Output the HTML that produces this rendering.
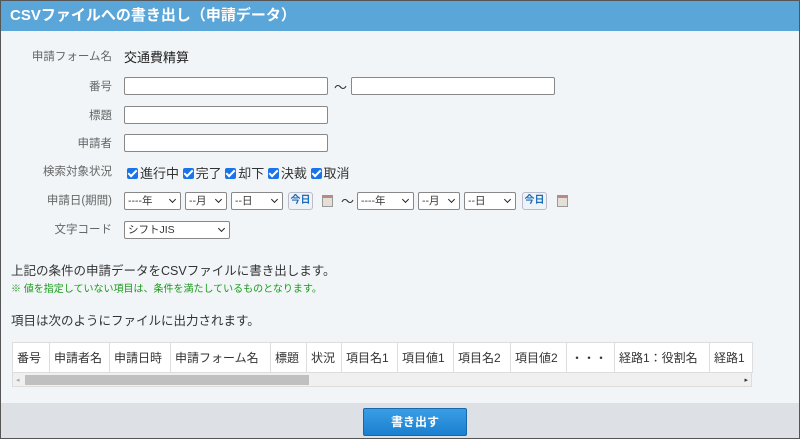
<!DOCTYPE html>
<html><head><meta charset="utf-8"><style>
*{box-sizing:border-box;margin:0;padding:0}
body{width:800px;height:439px;overflow:hidden;font-family:"Liberation Sans","Noto Sans CJK JP",sans-serif;font-size:12px;color:#333;background:#fff}
.wrap{position:absolute;left:0;top:0;width:800px;height:439px;border:1px solid #555;background:#f1f5f8}
.hd{position:absolute;left:0;top:0;width:798px;height:30px;background:#5aa6d9;color:#fff;font-weight:bold;font-size:15px;line-height:29px;padding-left:9px}
.lbl{position:absolute;right:687px;color:#666;font-size:11.5px;white-space:nowrap}
.abs{position:absolute;white-space:nowrap}
.in{position:absolute;height:18px;background:#fff;border:1px solid #888;border-radius:2px}
.sel{position:absolute;height:18px;background:#fff;border:1px solid #888;border-radius:2px;font-size:10.5px;line-height:16px;padding-left:3px;color:#333}
.sel:after{content:"";position:absolute;right:5px;top:4px;width:4px;height:4px;border-right:1.5px solid #222;border-bottom:1.5px solid #222;transform:rotate(45deg)}
.cb{display:inline-block;width:11px;height:11px;background:#1a73e8;border-radius:2px;vertical-align:-1px;margin-right:2px;position:relative}
.cb:after{content:"";position:absolute;left:3px;top:0px;width:3px;height:7px;border-right:2px solid #fff;border-bottom:2px solid #fff;transform:rotate(45deg)}
.today{position:absolute;height:18px;width:25px;background:#eef3f7;border:1px solid #bbc;border-radius:3px;color:#1e6bb8;font-weight:bold;font-size:10px;line-height:16px;text-align:center}
.cal{position:absolute;width:11px;height:12px;border:1px solid #999;background:#e4e0d8;border-top:3px solid #b88}
table{position:absolute;left:11px;top:341px;border-collapse:collapse;background:#fff}
td{border:1px solid #ddd;height:30px;padding:0 4px;font-size:12px;color:#333;white-space:nowrap}
</style></head><body><div class="wrap">
<div class="hd">CSVファイルへの書き出し（申請データ）</div>
<div class="lbl" style="top:47px">申請フォーム名</div>
<div class="abs" style="left:123px;top:46px;font-size:13px;color:#222">交通費精算</div>
<div class="lbl" style="top:77px">番号</div>
<div class="in" style="left:123px;top:76px;width:204px"></div>
<div class="abs" style="left:333px;top:76px;font-size:13px">～</div>
<div class="in" style="left:350px;top:76px;width:204px"></div>
<div class="lbl" style="top:106px">標題</div>
<div class="in" style="left:123px;top:105px;width:204px"></div>
<div class="lbl" style="top:134px">申請者</div>
<div class="in" style="left:123px;top:133px;width:204px"></div>
<div class="lbl" style="top:162px">検索対象状況</div>
<div class="abs" style="left:126px;top:162px;font-size:13px"><span class="cb"></span>進行中 <span class="cb"></span>完了 <span class="cb"></span>却下 <span class="cb"></span>決裁 <span class="cb"></span>取消</div>
<div class="lbl" style="top:191px">申請日(期間)</div>
<div class="sel" style="left:123px;top:191px;width:57px">----年</div>
<div class="sel" style="left:184px;top:191px;width:42px">--月</div>
<div class="sel" style="left:230px;top:191px;width:52px">--日</div>
<div class="today" style="left:287px;top:191px">今日</div>
<div class="cal" style="left:321px;top:194px"></div>
<div class="abs" style="left:340px;top:190px;font-size:13px">～</div>
<div class="sel" style="left:356px;top:191px;width:57px">----年</div>
<div class="sel" style="left:417px;top:191px;width:42px">--月</div>
<div class="sel" style="left:463px;top:191px;width:52px">--日</div>
<div class="today" style="left:521px;top:191px">今日</div>
<div class="cal" style="left:556px;top:194px"></div>
<div class="lbl" style="top:220px">文字コード</div>
<div class="sel" style="left:123px;top:220px;width:106px">シフトJIS</div>
<div class="abs" style="left:10px;top:259px;font-size:12.5px">上記の条件の申請データをCSVファイルに書き出します。</div>
<div class="abs" style="left:10px;top:279px;font-size:10px;color:#1a9a1a">※ 値を指定していない項目は、条件を満たしているものとなります。</div>
<div class="abs" style="left:10px;top:309px;font-size:12.5px">項目は次のようにファイルに出力されます。</div>
<table><tr><td style="width:37px">番号</td><td style="width:60px">申請者名</td><td style="width:61px">申請日時</td><td style="width:100px">申請フォーム名</td><td style="width:36px">標題</td><td style="width:35px">状況</td><td style="width:56px">項目名1</td><td style="width:56px">項目値1</td><td style="width:57px">項目名2</td><td style="width:56px">項目値2</td><td style="width:48px">・・・</td><td style="width:95px">経路1：役割名</td><td style="width:43px">経路1</td></tr></table>
<div class="abs" style="left:11px;top:371px;width:740px;height:15px;background:#f0f0f0;border:1px solid #ddd"><div style="position:absolute;left:12px;top:2px;width:284px;height:10px;background:#c0c0c0"></div><div style="position:absolute;left:3px;top:3px;font-size:7px;color:#aaa">◂</div><div style="position:absolute;right:3px;top:3px;font-size:7px;color:#333">▸</div></div>
<div class="abs" style="left:0;top:402px;width:798px;height:35px;background:#dde1e5"></div>
<div class="abs" style="left:362px;top:407px;width:104px;height:28px;background:linear-gradient(#3a9ee6,#1a7fcf);border:1px solid #1668a8;border-radius:2px;color:#fff;font-weight:bold;font-size:12px;text-align:center;line-height:26px">書き出す</div>
</div></body></html>
